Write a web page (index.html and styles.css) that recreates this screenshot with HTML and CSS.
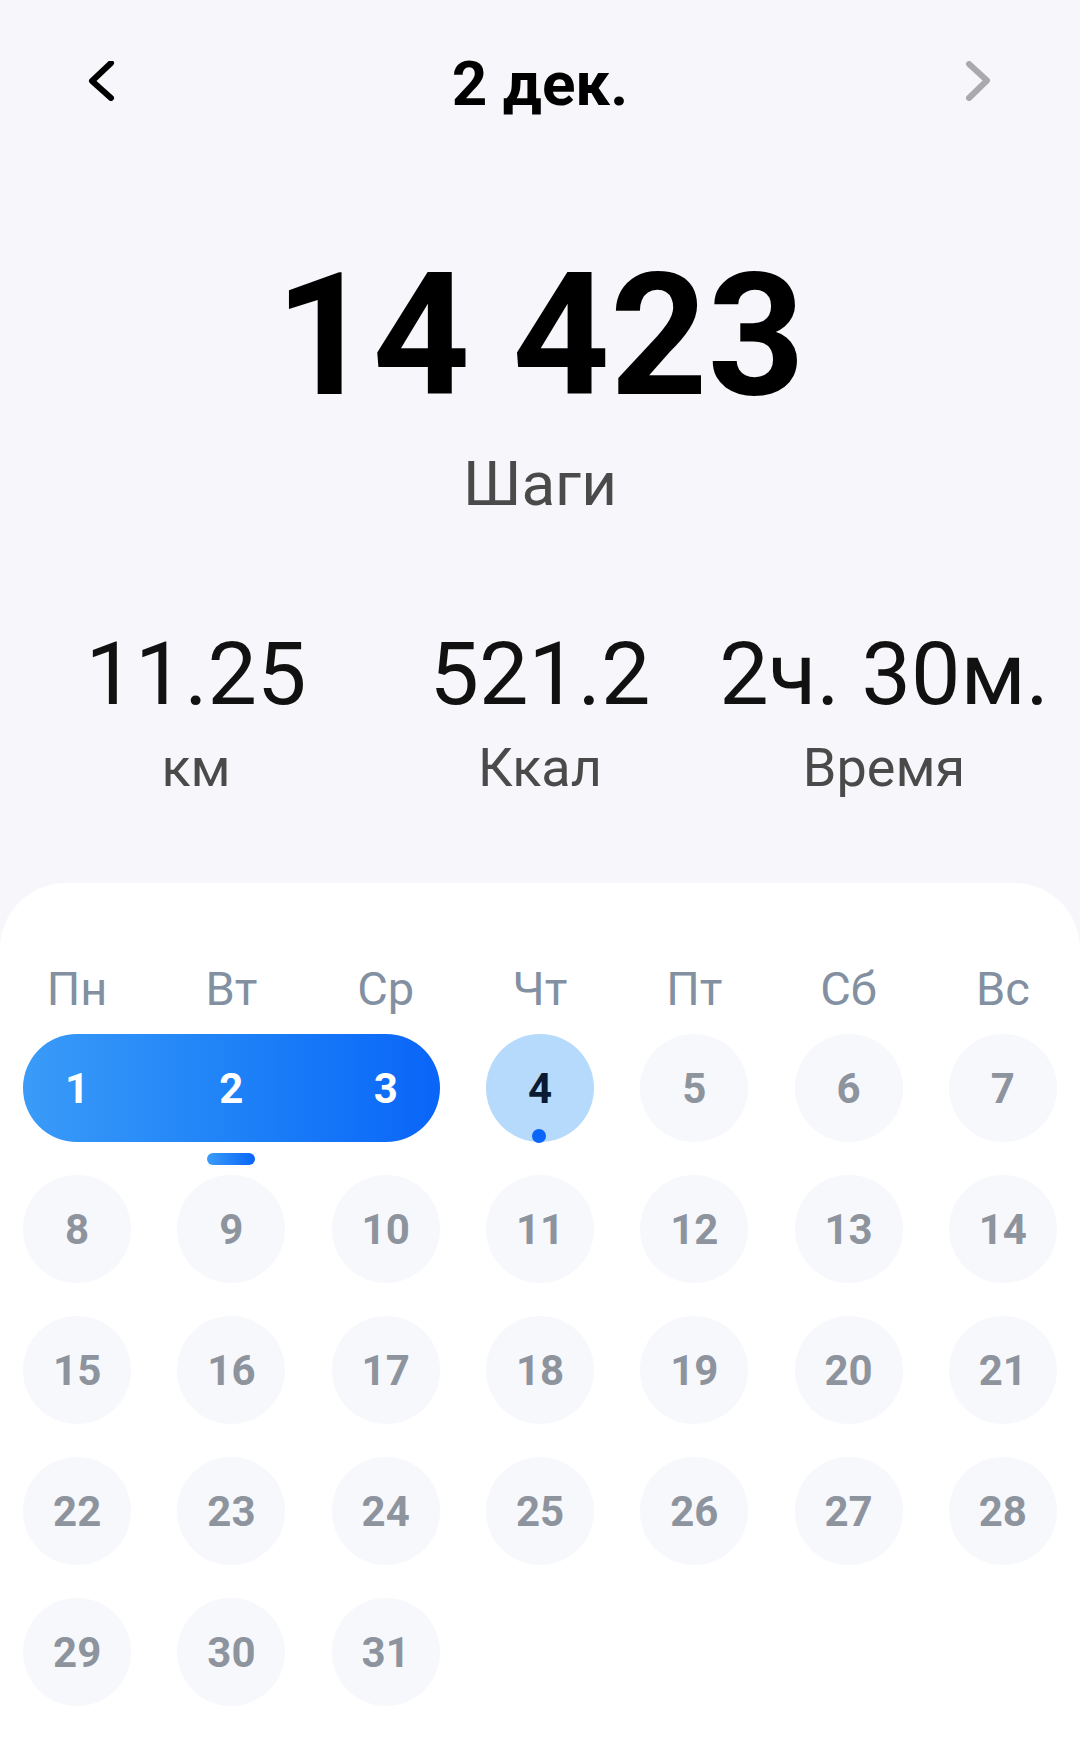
FILE: index.html
```html
<!DOCTYPE html>
<html lang="ru">
<head>
<meta charset="utf-8">
<title>Шаги</title>
<link rel="stylesheet" href="styles.css">
</head>
<body>
<div class="page">
  <header class="topbar">
    <svg class="nav" viewBox="0 0 40 40" width="40" height="40"><path d="M29 2 L10 20 L29 37" fill="none" stroke="#000" stroke-width="6" stroke-linecap="round" stroke-linejoin="round"/></svg>
    <div class="title">2 дек.</div>
    <svg class="nav" viewBox="0 0 40 40" width="40" height="40"><path d="M11 3 L29 19.5 L11 37" fill="none" stroke="#a9a9ae" stroke-width="6" stroke-linecap="round" stroke-linejoin="round"/></svg>
  </header>

  <div class="steps">14 423</div>
  <div class="steps-label">Шаги</div>

  <section class="stats">
    <div class="stat"><div class="stat-value">11.25</div><div class="stat-label">км</div></div>
    <div class="stat"><div class="stat-value">521.2</div><div class="stat-label">Ккал</div></div>
    <div class="stat"><div class="stat-value">2ч. 30м.</div><div class="stat-label">Время</div></div>
  </section>

  <section class="card">
    <div class="weekdays">
      <span>Пн</span><span>Вт</span><span>Ср</span><span>Чт</span><span>Пт</span><span>Сб</span><span>Вс</span>
    </div>
    <div class="days">
      <div class="range">
        <span class="rday">1</span>
        <span class="rday current">2</span>
        <span class="rday">3</span>
      </div>
      <div class="day today">4</div>
      <div class="day">5</div>
      <div class="day">6</div>
      <div class="day">7</div>
      <div class="day">8</div>
      <div class="day">9</div>
      <div class="day">10</div>
      <div class="day">11</div>
      <div class="day">12</div>
      <div class="day">13</div>
      <div class="day">14</div>
      <div class="day">15</div>
      <div class="day">16</div>
      <div class="day">17</div>
      <div class="day">18</div>
      <div class="day">19</div>
      <div class="day">20</div>
      <div class="day">21</div>
      <div class="day">22</div>
      <div class="day">23</div>
      <div class="day">24</div>
      <div class="day">25</div>
      <div class="day">26</div>
      <div class="day">27</div>
      <div class="day">28</div>
      <div class="day">29</div>
      <div class="day">30</div>
      <div class="day">31</div>
    </div>
  </section>
</div>
</body>
</html>
```

FILE: styles.css
```css
* { box-sizing: border-box; }
html, body { margin: 0; padding: 0; }
body {
  background: #f7f7fb;
  font-family: Roboto, "Noto Sans", "Liberation Sans", sans-serif;
  color: #000;
  width: 1080px;
  height: 1756px;
  overflow: hidden;
}
.page { display: flex; flex-direction: column; min-height: 1756px; }

.topbar {
  display: flex;
  justify-content: space-between;
  align-items: flex-start;
  padding: 0 82px;
  height: 162px;
}
.nav { display: block; margin-top: 61px; }
.title {
  margin-top: 53px;
  font-weight: 700;
  font-size: 62px;
  line-height: 62px;
  color: #000;
}

.steps {
  margin-top: 89px;
  text-align: center;
  font-weight: 700;
  font-size: 170px;
  line-height: 170px;
  color: #000;
}
.steps-label {
  margin-top: 32px;
  text-align: center;
  font-size: 62px;
  line-height: 62px;
  color: #4a4a4a;
}

.stats {
  margin-top: 115px;
  display: grid;
  grid-template-columns: repeat(3, 1fr);
  padding: 0 24px;
  text-align: center;
}
.stat-value {
  font-size: 88px;
  line-height: 88px;
  color: #111;
  white-space: nowrap;
}
.stat-label {
  margin-top: 23px;
  font-size: 54px;
  line-height: 54px;
  color: #4a4a4a;
}

.card {
  margin-top: 88px;
  flex: 1;
  background: #fff;
  border-radius: 66px 66px 0 0;
  padding: 82px 0 50px;
}
.weekdays {
  display: grid;
  grid-template-columns: repeat(7, 1fr);
  text-align: center;
  font-size: 47px;
  line-height: 47px;
  color: #8290a1;
}
.days {
  margin-top: 22px;
  display: grid;
  grid-template-columns: repeat(7, 1fr);
  row-gap: 33px;
}
.day {
  justify-self: center;
  width: 108px;
  height: 108px;
  border-radius: 50%;
  background: #f7f8fc;
  display: flex;
  align-items: center;
  justify-content: center;
  font-weight: 700;
  font-size: 42px;
  color: #8e949d;
  position: relative;
}
.day.today {
  background: #b5dafb;
  color: #0b1a33;
}
.day.today::after {
  content: "";
  position: absolute;
  left: 50%;
  bottom: -1px;
  width: 14px;
  height: 14px;
  margin-left: -8px;
  border-radius: 50%;
  background: #0a66f8;
}
.range {
  grid-column: 1 / 4;
  margin: 0 23px;
  height: 108px;
  border-radius: 54px;
  background: linear-gradient(90deg, #3a9bf8 0%, #1f82f7 50%, #0965f8 100%);
  display: flex;
  justify-content: space-between;
  align-items: center;
}
.rday {
  width: 108px;
  height: 108px;
  display: flex;
  align-items: center;
  justify-content: center;
  font-weight: 700;
  font-size: 42px;
  color: #fff;
  position: relative;
}
.rday.current::after {
  content: "";
  position: absolute;
  left: 30px;
  top: 119px;
  width: 48px;
  height: 12px;
  border-radius: 6px;
  background: linear-gradient(90deg, #3a9bf8, #0965f8);
}
```
